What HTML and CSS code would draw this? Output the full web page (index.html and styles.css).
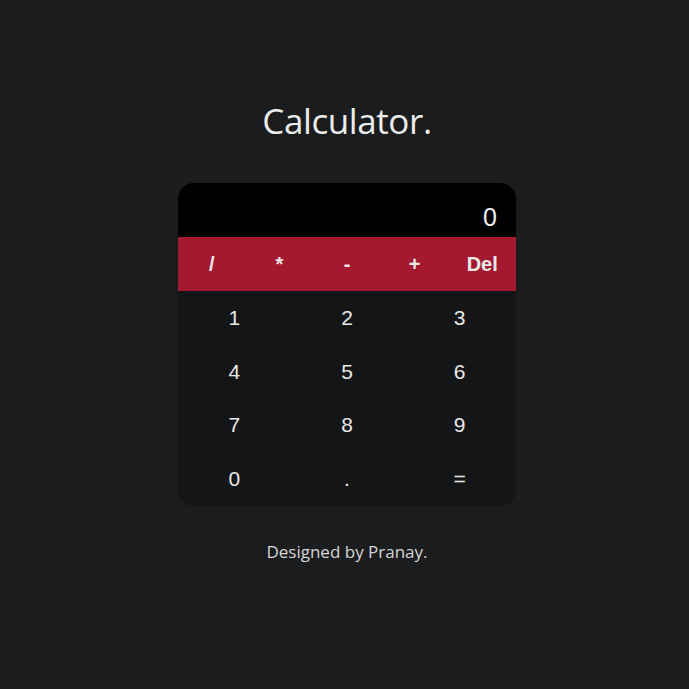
FILE: index.html
```html
<!DOCTYPE html>
<html>
<head>
<meta charset="utf-8">
<link rel="stylesheet" href="styles.css">
</head>
<body>
<main class="page">
  <h1 class="title">Calculator.</h1>
  <div class="calc">
    <div class="display">0</div>
    <div class="ops">
      <button class="key op">/</button>
      <button class="key op">*</button>
      <button class="key op">-</button>
      <button class="key op">+</button>
      <button class="key op">Del</button>
    </div>
    <div class="digits">
      <button class="key">1</button>
      <button class="key">2</button>
      <button class="key">3</button>
      <button class="key">4</button>
      <button class="key">5</button>
      <button class="key">6</button>
      <button class="key">7</button>
      <button class="key">8</button>
      <button class="key">9</button>
      <button class="key">0</button>
      <button class="key">.</button>
      <button class="key">=</button>
    </div>
  </div>
  <p class="credit">Designed by Pranay.</p>
</main>
</body>
</html>
```
FILE: styles.css
```css
html, body {
  margin: 0;
  padding: 0;
  background: #1b1c1e;
  height: 100%;
}
.page {
  display: flex;
  flex-direction: column;
  align-items: center;
  padding: 97px 0 0 5px;
  font-family: "Open Sans", "Noto Sans", sans-serif;
}
.title {
  margin: 0 0 38px;
  font-size: 35px;
  font-weight: 400;
  line-height: 48px;
  color: #ececec;
  letter-spacing: -0.4px;
}
.calc {
  width: 338px;
  border-radius: 16px;
  overflow: hidden;
  background: #141517;
}
.display {
  height: 54px;
  background: #000;
  color: #eee;
  font-family: "Liberation Sans", Arial, sans-serif;
  font-size: 25px;
  display: flex;
  align-items: center;
  justify-content: flex-end;
  padding: 14px 19px 0 0;
  box-sizing: border-box;
}
.ops {
  display: grid;
  grid-template-columns: repeat(5, 1fr);
  background: #a41930;
}
.digits {
  display: grid;
  grid-template-columns: repeat(3, 1fr);
}
.key {
  height: 54px;
  border: 0;
  background: transparent;
  color: #e8e8e8;
  font-family: "Liberation Sans", Arial, sans-serif;
  font-size: 21px;
  padding: 0;
}
.digits .key {
  height: 53.75px;
}
.op {
  font-weight: 700;
  font-size: 20px;
}
.credit {
  margin: 34px 0 0;
  font-size: 17px;
  color: #d6d6d6;
}
```
